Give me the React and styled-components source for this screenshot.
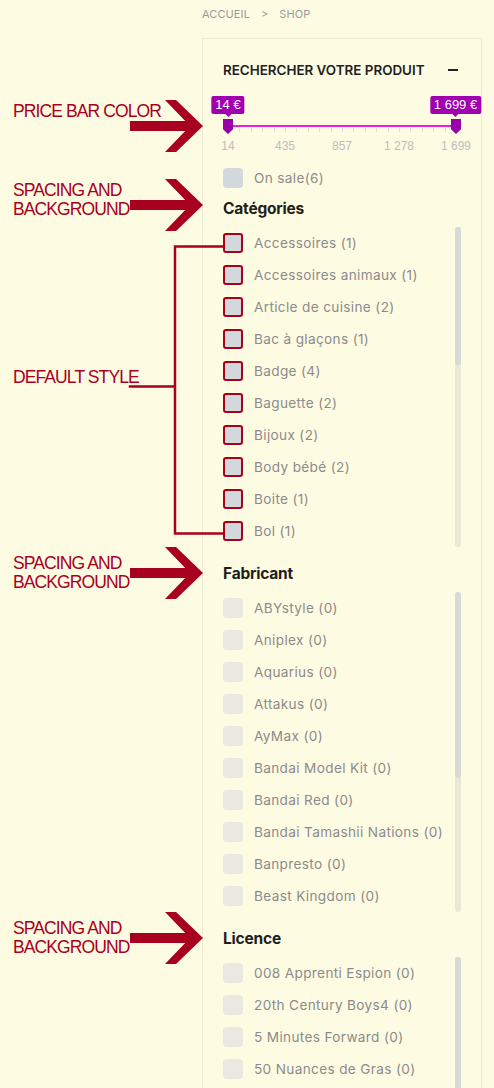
import React from "react";
import styled, { createGlobalStyle } from "styled-components";

const GlobalStyle = createGlobalStyle`
  body {
    margin: 0;
    background: #fefbe3;
    font-family: Inter, "Noto Sans", sans-serif;
  }
`;

const red = "#a8001f";

const Page = styled.div`
  position: relative;
  width: 494px;
  height: 1088px;
  overflow: hidden;
`;

const Column = styled.div`
  margin-left: 202px;
  width: 280px;
`;

const Breadcrumb = styled.div`
  height: 28px;
  display: flex;
  align-items: center;
  gap: 11px;
  font-size: 11px;
  color: #9a9a9a;
  text-transform: uppercase;
  letter-spacing: 0.1px;
`;

const Panel = styled.div`
  margin-top: 10px;
  border: 1px solid #efebd6;
  border-bottom: none;
  padding: 0 20px;
  display: flex;
  flex-direction: column;
`;

const Header = styled.div`
  margin-top: 21px;
  height: 20px;
  display: flex;
  justify-content: space-between;
  align-items: center;
  padding-right: 3px;
  font-size: 13.4px;
  font-weight: 600;
  color: #222;
  letter-spacing: 0px;
`;

const Minus = styled.span`
  width: 10px;
  height: 2px;
  background: #222;
`;

/* ---------- price slider ---------- */

const SliderBox = styled.div`
  position: relative;
  margin-top: 16px;
  height: 62px;
`;

const Tooltip = styled.div`
  position: absolute;
  top: 0;
  left: ${(p) => p.$left}px;
  transform: translateX(-50%);
  height: 18px;
  line-height: 18px;
  padding: 0 4px;
  border-radius: 2px;
  background: #a000b0;
  color: #fff;
  font-family: "Liberation Sans", Arial, sans-serif;
  font-size: 13px;
  white-space: nowrap;

  &::after {
    content: "";
    position: absolute;
    left: 50%;
    bottom: -3px;
    margin-left: -3px;
    border: 3px solid transparent;
    border-bottom: none;
    border-top-color: #a000b0;
  }
`;

const Track = styled.div`
  position: absolute;
  top: 29px;
  left: 5px;
  right: 5px;
  height: 2px;
  background: #e61ee6;
`;

const Ticks = styled.div`
  position: absolute;
  top: 32px;
  left: 5px;
  right: 4px;
  height: 4px;
  background: repeating-linear-gradient(
    to right,
    #dcdcdc 0 1px,
    transparent 1px 11.4px
  );
`;

const Handle = styled.div`
  position: absolute;
  top: 23px;
  left: ${(p) => p.$left - 5}px;
  width: 10px;
  height: 15px;
  background: #9800a8;
  clip-path: polygon(0 0, 100% 0, 100% 68%, 50% 100%, 0 68%);
`;

const ScaleLabel = styled.span`
  position: absolute;
  top: 41px;
  left: ${(p) => p.$left}px;
  transform: translateX(-50%);
  line-height: 18px;
  font-family: "Liberation Sans", Arial, sans-serif;
  font-size: 12px;
  color: #bdbdbd;
  white-space: nowrap;
`;

/* ---------- filter lists ---------- */

const Row = styled.label`
  display: flex;
  align-items: center;
  gap: 11px;
  height: ${(p) => (p.$tall ? 32 : 20)}px;
  margin-top: ${(p) => p.$mt || 0}px;
  font-size: 13.6px;
  letter-spacing: 0.35px;
  color: #8b8b8b;
  white-space: nowrap;
`;

const Check = styled.span`
  flex: none;
  box-sizing: border-box;
  width: 20px;
  height: 20px;
  border-radius: ${(p) => (p.$variant === "cat" ? 3 : 4)}px;
  background: ${(p) =>
    p.$variant === "plain" ? "#e9e9e1" : "#d3d8dd"};
  border: ${(p) => (p.$variant === "cat" ? `2px solid ${red}` : "none")};
`;

const Heading = styled.h3`
  margin: ${(p) => p.$mt}px 0 0;
  line-height: 20px;
  font-size: 15.5px;
  font-weight: 700;
  color: #1e1e1e;
  letter-spacing: -0.2px;
`;

const ListWrap = styled.div`
  margin-top: 8px;
  height: ${(p) => p.$h}px;
  display: flex;
  overflow: hidden;
`;

const Items = styled.div`
  flex: 1;
  display: flex;
  flex-direction: column;
`;

const ScrollTrack = styled.div`
  flex: none;
  width: 6px;
  border-radius: 3px;
  background: #ebe8d5;
`;

const ScrollThumb = styled.div`
  height: ${(p) => p.$h}px;
  border-radius: 3px;
  background: #d9d9d9;
`;

/* ---------- annotations ---------- */

const Overlay = styled.svg`
  position: absolute;
  top: 0;
  left: 0;
  pointer-events: none;
`;

const Note = styled.div`
  position: absolute;
  left: 13px;
  top: ${(p) => p.$top}px;
  font-family: "Liberation Sans", Arial, sans-serif;
  font-size: 17.5px;
  line-height: 19px;
  letter-spacing: -0.9px;
  color: ${red};
  pointer-events: none;
`;

const categories = [
  "Accessoires (1)",
  "Accessoires animaux (1)",
  "Article de cuisine (2)",
  "Bac à glaçons (1)",
  "Badge (4)",
  "Baguette (2)",
  "Bijoux (2)",
  "Body bébé (2)",
  "Boite (1)",
  "Bol (1)",
];

const makers = [
  "ABYstyle (0)",
  "Aniplex (0)",
  "Aquarius (0)",
  "Attakus (0)",
  "AyMax (0)",
  "Bandai Model Kit (0)",
  "Bandai Red (0)",
  "Bandai Tamashii Nations (0)",
  "Banpresto (0)",
  "Beast Kingdom (0)",
];

const licences = [
  "008 Apprenti Espion (0)",
  "20th Century Boys4 (0)",
  "5 Minutes Forward (0)",
  "50 Nuances de Gras (0)",
];

const scale = ["14", "435", "857", "1 278", "1 699"];

const FilterList = ({ items, variant, thumb, height = 320 }) => (
  <ListWrap $h={height}>
    <Items>
      {items.map((t) => (
        <Row key={t} $tall>
          <Check $variant={variant} />
          {t}
        </Row>
      ))}
    </Items>
    <ScrollTrack>
      <ScrollThumb $h={thumb} />
    </ScrollTrack>
  </ListWrap>
);

const Arrow = ({ cy }) => (
  <g fill={red}>
    <rect x="130" y={cy - 5} width="60" height="10" />
    <polygon
      points={`165,${cy - 26} 176,${cy - 26} 203,${cy} 176,${cy + 26} 165,${cy + 26} 190,${cy}`}
    />
  </g>
);

export default function App() {
  return (
    <Page>
      <GlobalStyle />
      <Column>
        <Breadcrumb>
          <span>Accueil</span>
          <span>&gt;</span>
          <span>Shop</span>
        </Breadcrumb>
        <Panel>
          <Header>
            <span>RECHERCHER VOTRE PRODUIT</span>
            <Minus />
          </Header>

          <SliderBox>
            <Track />
            <Ticks />
            <Handle $left={5} />
            <Handle $left={233} />
            <Tooltip $left={5}>14 €</Tooltip>
            <Tooltip $left={232.5}>1 699 €</Tooltip>
            {scale.map((s, i) => (
              <ScaleLabel key={s} $left={5 + (228 * i) / 4}>
                {s}
              </ScaleLabel>
            ))}
          </SliderBox>

          <Row $mt={10}>
            <Check />
            On sale(6)
          </Row>

          <Heading $mt={11}>Catégories</Heading>
          <FilterList items={categories} variant="cat" thumb={138} />

          <Heading $mt={17}>Fabricant</Heading>
          <FilterList items={makers} variant="plain" thumb={186} />

          <Heading $mt={17}>Licence</Heading>
          <FilterList
            items={licences}
            variant="plain"
            thumb={150}
            height={140}
          />
        </Panel>
      </Column>

      <Note $top={102}>PRICE BAR COLOR</Note>
      <Note $top={181}>
        SPACING AND
        <br />
        BACKGROUND
      </Note>
      <Note $top={368}>DEFAULT STYLE</Note>
      <Note $top={554}>
        SPACING AND
        <br />
        BACKGROUND
      </Note>
      <Note $top={919}>
        SPACING AND
        <br />
        BACKGROUND
      </Note>

      <Overlay width="494" height="1088" viewBox="0 0 494 1088">
        <Arrow cy={126} />
        <Arrow cy={205} />
        <Arrow cy={573} />
        <Arrow cy={938} />
        <path
          d="M130 386.5 H175 M175 246.5 V533.5 M175 246.5 H223 M175 533.5 H223"
          stroke={red}
          strokeWidth="2.5"
          fill="none"
          strokeLinecap="square"
        />
      </Overlay>
    </Page>
  );
}
